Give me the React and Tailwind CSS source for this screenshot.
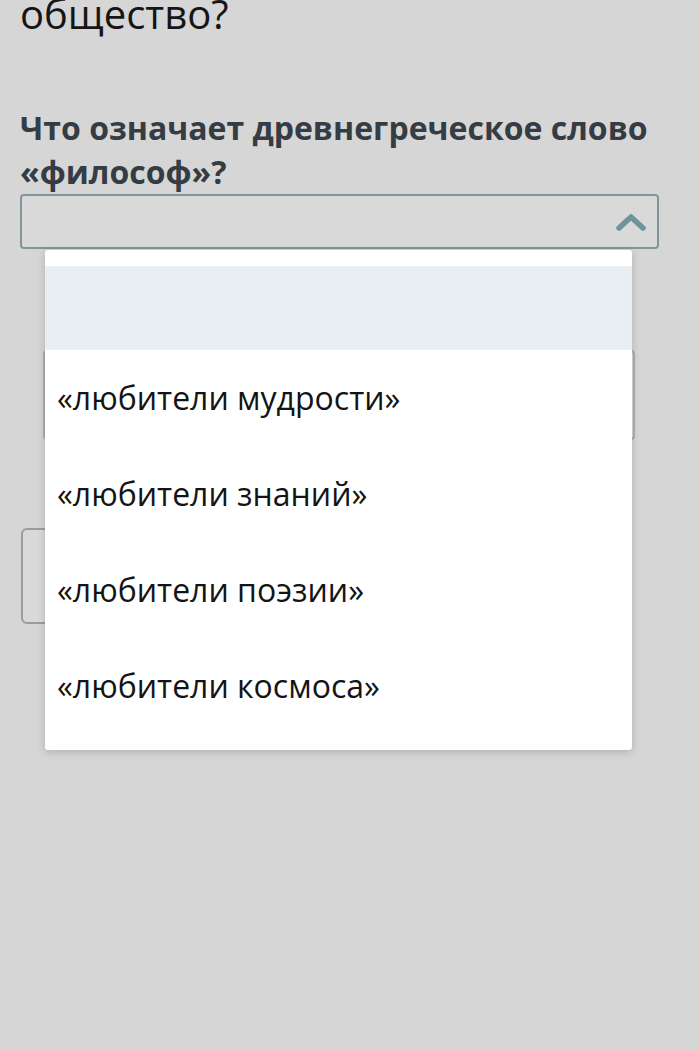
export default function App() {
  const options = ["«любители мудрости»", "«любители знаний»", "«любители поэзии»", "«любители космоса»"];
  return (
    <div className="relative h-[1050px] w-full overflow-hidden bg-[#d6d6d6] font-['Open_Sans',sans-serif]">
      <div className="pl-5 pr-10">
        <div className="-mt-[11px] text-[40px] leading-[50px] text-[#151515]">общество?</div>
        <div className="mt-[67px] text-[32px] font-bold leading-[44px] text-[#353c44]">
          Что означает древнегреческое слово «философ»?
        </div>
        <div className="flex h-[55px] items-center justify-end rounded-[4px] border-2 border-[#7f979a] bg-[#d9d9d9] pr-[10px]">
          <svg width="32" height="20" viewBox="0 0 32 20" fill="none">
            <path d="M4 16 L16 5 L28 16" stroke="#6e9497" strokeWidth="5.5" strokeLinecap="round" strokeLinejoin="round" />
          </svg>
        </div>
        <div className="ml-[23px] mt-[101px] h-[90px] w-[592px] rounded-[4px] border-2 border-[#a9b1b3] bg-[#dadada]"></div>
        <div className="ml-[1px] mt-[88px] h-[96px] w-[220px] rounded-[6px] border-2 border-[#9a9c9d] bg-[#d9d9d9]"></div>
      </div>

      <div className="absolute left-[45px] top-[250px] w-[587px] rounded-[3px] bg-white py-4 shadow-[0_2px_8px_rgba(0,0,0,0.18)]">
        <div className="h-[84px] bg-[#e8eef1]"></div>
        {options.map((o) => (
          <div key={o} className="flex h-[96px] items-center pl-[12px] text-[32px] text-[#141414]">
            {o}
          </div>
        ))}
      </div>
    </div>
  );
}
